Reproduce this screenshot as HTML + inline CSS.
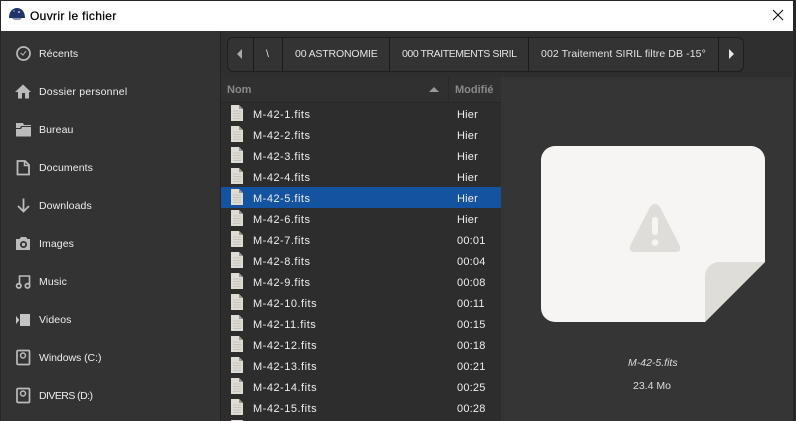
<!DOCTYPE html>
<html><head><meta charset="utf-8"><style>
html,body{margin:0;padding:0;width:796px;height:421px;overflow:hidden;background:#2b2b2b}
body{position:relative;font-family:"Liberation Sans",sans-serif;font-size:11px;color:#eee}
.a{position:absolute}
.t{position:absolute;white-space:nowrap;line-height:14px}
.s{left:39px;font-size:10.5px;letter-spacing:.1px;color:#eee}
.n{left:253px;font-size:11px;letter-spacing:.5px;color:#eee}
.d{left:457px;font-size:11px;letter-spacing:.2px;color:#eee}
.sep{position:absolute;top:37px;width:1px;height:34px;background:#1b1b1b}
.p{top:47px;font-size:10.5px;color:#e4e4e4}
</style></head><body>
<div class="a" style="left:0;top:0;width:796px;height:421px;background:#272727"></div>
<div class="a" style="left:1px;top:31px;width:792px;height:390px;background:#333"></div>
<div class="a" style="left:1px;top:1px;width:792px;height:30px;background:#fff"></div>
<svg class="a" style="left:9px;top:7px" width="16" height="14"><path d="M0 11C0 4 4 1 8 1s8 3 8 10z" fill="#1f3468"/><path d="M3 11h10l-2 2H5z" fill="#8b93b5"/><circle cx="10" cy="5" r="1" fill="#bcc6e0"/><circle cx="5" cy="4" r=".8" fill="#9aa8cc"/></svg>
<div class="t" style="left:30px;top:9px;font-size:12px;letter-spacing:.35px;color:#000;-webkit-text-stroke:.25px #000">Ouvrir le fichier</div>
<svg class="a" style="left:772px;top:9px" width="12" height="12"><path d="M1 1l10 10M11 1L1 11" stroke="#111" stroke-width="1.1" fill="none"/></svg>

<!-- sidebar -->
<div class="a" style="left:220px;top:31px;width:1px;height:390px;background:#232323"></div>
<svg class="a" style="left:15px;top:45px" width="18" height="18"><circle cx="8.500" cy="8.500" r="6.500" fill="none" stroke="#bbb" stroke-width="1.700"/><path d="M5.500 8l2.500 2 3-4" fill="none" stroke="#bbb" stroke-width="1"/></svg>
<svg class="a" style="left:15px;top:83px" width="18" height="18"><path d="M0 9L8 1.500 16 9h-2v6.500h-4V10H7v5.500H3V9z" fill="#bbb"/></svg>
<svg class="a" style="left:15px;top:121px" width="18" height="18"><path d="M1 2h7l1 2h7v1H6L5 7H1z" fill="#bbb"/><path d="M1 8h5l1-2h9v9.500H1z" fill="#bbb"/></svg>
<svg class="a" style="left:15px;top:159px" width="18" height="18"><path d="M2.500 2h7.500l4 4v9.500H2.500z" fill="none" stroke="#bbb" stroke-width="1.800"/><path d="M9.500 2v4.500H14" fill="none" stroke="#bbb" stroke-width="1.500"/></svg>
<svg class="a" style="left:15px;top:197px" width="18" height="18"><path d="M8.500 1.500v13M3 9l5.500 5.500L14 9" fill="none" stroke="#bbb" stroke-width="1.800"/></svg>
<svg class="a" style="left:15px;top:235px" width="18" height="18"><path fill-rule="evenodd" d="M1 4h3.500L6 2h5l1.500 2H15v11H1zM8.500 6a3.500 3.500 0 100 7 3.500 3.500 0 000-7zM8.500 7.800a1.700 1.700 0 110 3.400 1.700 1.700 0 010-3.400z" fill="#bbb"/></svg>
<svg class="a" style="left:15px;top:273px" width="18" height="18"><path d="M4.500 12V3h10v9" fill="none" stroke="#bbb" stroke-width="1.600"/><circle cx="3.800" cy="12.800" r="2.200" fill="none" stroke="#bbb" stroke-width="1.700"/><circle cx="12.500" cy="12.800" r="2.200" fill="none" stroke="#bbb" stroke-width="1.700"/></svg>
<svg class="a" style="left:15px;top:311px" width="18" height="18"><path d="M5 3h10v12H5z" fill="#c4c4c4"/><path d="M1 5l3 3.500v1L1 13z" fill="#c4c4c4"/></svg>
<svg class="a" style="left:15px;top:349px" width="18" height="18"><rect x="2" y="1.500" width="12.500" height="14" rx="1" fill="none" stroke="#bbb" stroke-width="1.700"/><circle cx="8" cy="6.500" r="2.500" fill="none" stroke="#bbb" stroke-width="1.500"/></svg>
<svg class="a" style="left:15px;top:387px" width="18" height="18"><rect x="2" y="1.500" width="12.500" height="14" rx="1" fill="none" stroke="#bbb" stroke-width="1.700"/><circle cx="8" cy="6.500" r="2.500" fill="none" stroke="#bbb" stroke-width="1.500"/></svg>
<div class="t s" style="top:47px">Récents</div>
<div class="t s" style="top:85px;letter-spacing:.22px">Dossier personnel</div>
<div class="t s" style="top:123px">Bureau</div>
<div class="t s" style="top:161px">Documents</div>
<div class="t s" style="top:199px">Downloads</div>
<div class="t s" style="top:237px">Images</div>
<div class="t s" style="top:275px">Music</div>
<div class="t s" style="top:313px">Videos</div>
<div class="t s" style="top:351px;letter-spacing:-.05px">Windows (C:)</div>
<div class="t s" style="top:389px;letter-spacing:-.55px">DIVERS (D:)</div>

<!-- path bar -->
<div class="a" style="left:221px;top:31px;width:572px;height:46px;background:#2f2f2f"></div>
<div class="a" style="left:227px;top:37px;width:515px;height:33px;border:1px solid #1e1e1e;border-radius:6px;background:#333"></div>
<div class="sep" style="left:253px"></div><div class="sep" style="left:282px"></div><div class="sep" style="left:389px"></div><div class="sep" style="left:528px"></div><div class="sep" style="left:718px"></div>
<svg class="a" style="left:236px;top:49px" width="8" height="10"><path d="M6 0v10L1 5z" fill="#aaa"/></svg>
<svg class="a" style="left:728px;top:49px" width="8" height="10"><path d="M1 0v10l5-5z" fill="#e8e8e8"/></svg>
<div class="t p" style="left:266px">\</div>
<div class="t p" style="left:295px;letter-spacing:-.15px">00 ASTRONOMIE</div>
<div class="t p" style="left:402px;letter-spacing:-.43px">000 TRAITEMENTS SIRIL</div>
<div class="t p" style="left:541px;letter-spacing:.1px">002 Traitement SIRIL filtre DB -15°</div>

<!-- list -->
<div class="a" style="left:221px;top:77px;width:280px;height:344px;background:#2d2d2d"></div>
<div class="a" style="left:221px;top:77px;width:280px;height:25px;background:#303030;border-bottom:1px solid #272727"></div>
<div class="a" style="left:448px;top:77px;width:1px;height:25px;background:#292929"></div>
<div class="t" style="left:227px;top:83px;font-size:11px;font-weight:700;color:#8a8a8a">Nom</div>
<div class="t" style="left:455px;top:83px;font-size:11px;font-weight:700;color:#8a8a8a">Modifié</div>
<svg class="a" style="left:428px;top:86px" width="12" height="7"><path d="M1 6l5-5 5 5z" fill="#999"/></svg>
<div class="a" style="left:221px;top:187px;width:280px;height:21px;background:#14539f"></div>
<svg width="0" height="0" style="position:absolute"><defs><g id="f"><path d="M0 0h8l4 4v12H0z" fill="#dedcd4"/><path d="M8 0v4h4z" fill="#9a9a94"/><path d="M2 6h8M2 8.500h8M2 11h8M2 13.500h8" stroke="#bdbcb5" stroke-width=".8"/></g></defs></svg>
<svg class="a" style="left:231px;top:105px" width="13" height="315">
<use href="#f" y="0"/><use href="#f" y="21"/><use href="#f" y="42"/><use href="#f" y="63"/><use href="#f" y="84"/><use href="#f" y="105"/><use href="#f" y="126"/><use href="#f" y="147"/><use href="#f" y="168"/><use href="#f" y="189"/><use href="#f" y="210"/><use href="#f" y="231"/><use href="#f" y="252"/><use href="#f" y="273"/><use href="#f" y="294"/></svg>
<svg class="a" style="left:231px;top:420px" width="13" height="1"><rect width="12" height="1" fill="#dedcd4"/></svg>
<div class="t n" style="top:108px">M-42-1.fits</div><div class="t d" style="top:108px">Hier</div>
<div class="t n" style="top:129px">M-42-2.fits</div><div class="t d" style="top:129px">Hier</div>
<div class="t n" style="top:150px">M-42-3.fits</div><div class="t d" style="top:150px">Hier</div>
<div class="t n" style="top:171px">M-42-4.fits</div><div class="t d" style="top:171px">Hier</div>
<div class="t n" style="top:192px">M-42-5.fits</div><div class="t d" style="top:192px">Hier</div>
<div class="t n" style="top:213px">M-42-6.fits</div><div class="t d" style="top:213px">Hier</div>
<div class="t n" style="top:234px">M-42-7.fits</div><div class="t d" style="top:234px">00:01</div>
<div class="t n" style="top:255px">M-42-8.fits</div><div class="t d" style="top:255px">00:04</div>
<div class="t n" style="top:276px">M-42-9.fits</div><div class="t d" style="top:276px">00:08</div>
<div class="t n" style="top:297px">M-42-10.fits</div><div class="t d" style="top:297px">00:11</div>
<div class="t n" style="top:318px">M-42-11.fits</div><div class="t d" style="top:318px">00:15</div>
<div class="t n" style="top:339px">M-42-12.fits</div><div class="t d" style="top:339px">00:18</div>
<div class="t n" style="top:360px">M-42-13.fits</div><div class="t d" style="top:360px">00:21</div>
<div class="t n" style="top:381px">M-42-14.fits</div><div class="t d" style="top:381px">00:25</div>
<div class="t n" style="top:402px">M-42-15.fits</div><div class="t d" style="top:402px">00:28</div>

<!-- preview -->
<div class="a" style="left:501px;top:77px;width:292px;height:344px;background:#353535"></div>
<svg class="a" style="left:541px;top:146px" width="224" height="176">
<path d="M14 0H210a14 14 0 0 1 14 14V116L164 176H14A14 14 0 0 1 0 162V14A14 14 0 0 1 14 0z" fill="#f6f5f4"/>
<path d="M224 116H178a14 14 0 0 0-14 14V176z" fill="#deddda"/>
<path d="M109 61L89 100q-1.500 6 4 6H135q5.500 0 4-6L119 61q-5-6-10 0z" fill="#deddda"/>
<rect x="111" y="71" width="6" height="18" rx="3" fill="#f6f5f4"/><circle cx="114" cy="96.500" r="3.300" fill="#f6f5f4"/>
</svg>
<div class="t" style="left:628px;top:356px;font-size:10.5px;font-style:italic;color:#ddd">M-42-5.fits</div>
<div class="t" style="left:633px;top:379px;font-size:10.5px;color:#ddd">23.4 Mo</div>
</body></html>
